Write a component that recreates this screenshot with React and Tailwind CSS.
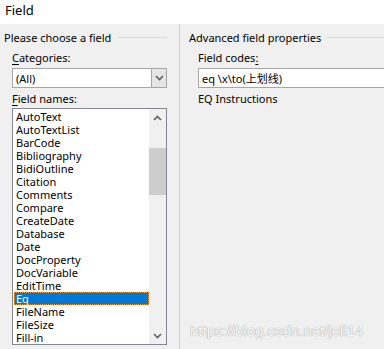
import React from "react";

const fields = [
  "AutoText",
  "AutoTextList",
  "BarCode",
  "Bibliography",
  "BidiOutline",
  "Citation",
  "Comments",
  "Compare",
  "CreateDate",
  "Database",
  "Date",
  "DocProperty",
  "DocVariable",
  "EditTime",
  "Eq",
  "FileName",
  "FileSize",
  "Fill-in",
];

function Chevron({ up }) {
  return (
    <svg width="9" height="6" viewBox="0 0 9 6" className="block">
      <path
        d={up ? "M1 5 L4.5 1.5 L8 5" : "M1 1 L4.5 4.5 L8 1"}
        fill="none"
        stroke="#606060"
        strokeWidth="1.6"
      />
    </svg>
  );
}

function GroupTitle({ children }) {
  return (
    <div className="flex items-center h-[14px] gap-[6px]">
      <span className="whitespace-nowrap">{children}</span>
      <div className="flex-1 h-px bg-[#dcdcdc]" />
    </div>
  );
}

export default function App() {
  return (
    <div
      className="w-[384px] h-[349px] overflow-hidden bg-[#f0f0f0] text-[11px] leading-[13px] text-black relative"
      style={{ fontFamily: '"Noto Sans", "Noto Sans CJK SC", sans-serif' }}
    >
      <div className="h-[24px] bg-white pl-[5px] pt-[1px] text-[13px] leading-[18px]">Field</div>

      <div className="flex">
        <div className="w-[180px] pl-[4px] pr-[12px] pt-[6px] border-r border-[#d0d0d0] h-[325px]">
          <GroupTitle>Please choose a field</GroupTitle>
          <div className="pl-[8px] mt-[7px]">
            <div className="h-[13px]">
              <span className="underline underline-offset-2">C</span>ategories:
            </div>
            <div className="mt-[4px] h-[20px] flex border border-[#a6a6a6] bg-white">
              <div className="flex-1 pl-[3px] pt-[3px]">(All)</div>
              <div className="w-[15px] bg-[#e5e5e5] border-l border-[#a6a6a6] flex items-center justify-center">
                <Chevron />
              </div>
            </div>
            <div className="mt-[4px] h-[13px]">
              <span className="underline underline-offset-2">F</span>ield names:
            </div>
            <div className="mt-[3px] h-[237px] flex border border-[#828790] bg-white">
              <div className="flex-1 pt-[1px] pl-[1px]">
                {fields.map((f) => (
                  <div
                    key={f}
                    className={
                      f === "Eq"
                        ? "h-[13px] pl-[2px] bg-[#0078d7] text-white outline-1 outline-dotted outline-[#ff9933] -outline-offset-1"
                        : "h-[13px] pl-[2px]"
                    }
                  >
                    {f}
                  </div>
                ))}
              </div>
              <div className="w-[17px] bg-[#f0f0f0] flex flex-col">
                <div className="h-[17px] flex items-center justify-center">
                  <Chevron up />
                </div>
                <div className="h-[22px]" />
                <div className="h-[47px] bg-[#cdcdcd]" />
                <div className="flex-1" />
                <div className="h-[17px] flex items-center justify-center">
                  <Chevron />
                </div>
              </div>
            </div>
          </div>
        </div>

        <div className="flex-1 pl-[9px] pt-[6px]">
          <GroupTitle>Advanced field properties</GroupTitle>
          <div className="pl-[9px] mt-[7px]">
            <div className="h-[13px]">
              Field codes<span className="underline underline-offset-2">:</span>
            </div>
            <div className="mt-[4px] h-[20px] border border-[#a6a6a6] border-r-0 bg-white pl-[3px] pt-[3px] whitespace-nowrap">
              eq \x\to(上划线)
            </div>
            <div className="mt-[4px] h-[13px]">EQ Instructions</div>
          </div>
        </div>
      </div>

      <div
        className="absolute left-[190px] top-[322px] text-[15px] leading-[18px] text-[#f8f8f8]"
        style={{ fontFamily: '"Liberation Sans", sans-serif', textShadow: "0 0 1px #a8a8a8, 0 0 1px #a8a8a8" }}
      >
        https://blog.csdn.net/jell14
      </div>
    </div>
  );
}
